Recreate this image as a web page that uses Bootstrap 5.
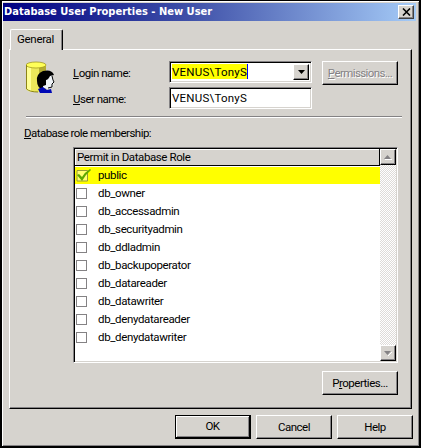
<!DOCTYPE html>
<html lang="en">
<head>
<meta charset="utf-8">
<meta name="viewport" content="width=device-width, initial-scale=1">
<title>Database User Properties - New User</title>
<link href="https://cdn.jsdelivr.net/npm/bootstrap@5.3.0/dist/css/bootstrap.min.css" rel="stylesheet">
<style>
*{border-radius:0!important}
body{width:421px;height:448px;overflow:hidden;background:#d6d3ce;font:11.5px/16px Roboto,"Liberation Sans",sans-serif;letter-spacing:-.36px;color:#000}
.dialog{width:421px;height:448px;border:1px solid #000;border-left-width:2px;border-bottom-width:2px;border-right-width:2px;box-shadow:inset 1px 1px #fff,inset -1px -1px #848284;padding:2px 3px 0 1px}
.titlebar{height:18px;background:linear-gradient(90deg,#000082,#3f50a8 45%,#a5cbf7);color:#fff;font:bold 11px/18px "DejaVu Sans Condensed","DejaVu Sans",sans-serif;font-stretch:condensed;letter-spacing:.02px;padding:0 2px 0 1px}
.closer{width:16px;height:14px;background:#d6d3ce;border:1px solid;border-color:#fff #404040 #404040 #fff;box-shadow:inset -1px -1px #848284}
.tabstrip{height:28px;padding:8px 0 0 7px}
.dtab{width:53px;height:21px;border:1px solid #fff;border-right:1px solid #000;border-bottom:0;border-radius:2px 2px 0 0!important;box-shadow:inset -1px 0 #848284;background:#d6d3ce;padding:1px 0 0 6px;z-index:1;position:relative;letter-spacing:-.3px}
.panel{margin-left:6px;width:403px;height:360px;border:1px solid;border-color:#fff #000 #000 #fff;box-shadow:inset -1px -1px #848284;padding:11px 13px 0 16px}
.dbicon{width:30px;height:34px}
.labels{width:97px;margin-left:17px;letter-spacing:-.5px}
.labels>div{height:26px;line-height:24px}
.fields{gap:4px;margin-left:-1px}
.field{width:143px;height:22px;background:#fff;border:1px solid;border-color:#848284 #fff #fff #848284;box-shadow:inset 1px 1px #000,inset -1px -1px #d6d3ce;padding:2px}
.hl{background:#ff0;height:15px;line-height:16px;border-right:1px solid #00f;letter-spacing:.22px;width:76px;white-space:nowrap}
.val{letter-spacing:.22px;line-height:16px}
.drop{width:16px;height:16px;background:#d6d3ce;border:1px solid;border-color:#fff #000 #000 #fff;box-shadow:inset -1px -1px #848284}
.wbtn{width:76px;height:24px;padding:0;background:#d6d3ce;border:1px solid;border-color:#fff #000 #000 #fff;box-shadow:inset -1px -1px #848284;font-size:11.5px;line-height:21px;letter-spacing:-.5px;color:#000}
.wbtn:disabled{opacity:1;color:#848284;background:#d6d3ce;border-color:#fff #000 #000 #fff;text-shadow:1px 1px #fff;letter-spacing:-.6px}
.wbtn.main{border:1px solid #000;border-right-width:2px;border-bottom-width:2px;box-shadow:inset 1px 1px #fff,inset -1px -1px #848284}
.rule{height:2px;background:#848284;border-bottom:1px solid #fff;margin:3px -4px 0 0}
.caption-line{margin:7px 0 6px -2px;letter-spacing:-.54px}
.roles{width:325px;height:216px;margin-left:47px;background:#fff;border:1px solid;border-color:#848284 #fff #fff #848284;box-shadow:inset 1px 1px #000,inset -1px -1px #d6d3ce;padding:1px}
.head{height:17px;background:#d6d3ce;border:1px solid #000;border-width:0 1px 1px 0;box-shadow:inset 1px 1px #fff;padding-left:2px;line-height:17px;letter-spacing:-.4px}
.role{height:18px;padding-left:1px;line-height:17px}
.role.on{height:17px;margin:1px 0 0;background:#ff0}
.box{width:11px;height:11px;border:1px solid #848284;margin-right:11px}
.track{width:16px;background:repeating-conic-gradient(#fff 0 25%,#dedbd8 0 50%) 0 0/2px 2px}
.sbtn{height:16px;background:#d6d3ce;border:1px solid;border-color:#fff #000 #000 #fff;box-shadow:inset -1px -1px #848284}
.footer-row{padding:6px 0 0 172px;gap:5px}
</style>
</head>
<body>
<main class="dialog d-flex flex-column">
  <header class="titlebar d-flex align-items-center justify-content-between"><span>Database User Properties - New User</span>
    <span class="closer d-flex align-items-center justify-content-center"><svg width="9" height="8" viewBox="0 0 9 8"><path d="M1 .5 8 7.5M8 .5 1 7.5" stroke="#000" stroke-width="1.6"/></svg></span></header>
  <div class="tabstrip"><div class="dtab">General</div></div>
  <section class="panel">
    <div class="d-flex">
      <svg class="dbicon" viewBox="0 0 30 34"><path d="M0 4V28Q2 31 10 31H16Q20 30 20 28V4Z" fill="#ece85a"/><path d="M0 4V28Q2 31 5 31V5Z" fill="#ffff94"/><path d="M13 5H20V29L13 31Z" fill="#b5ad32"/><ellipse cx="10" cy="4" rx="10" ry="3" fill="#ffff58" stroke="#a59c20" stroke-width=".8"/><path d="M.5 4V28Q4 31 12 31" fill="none" stroke="#8c8418"/><path d="M18 13 26 14 28 20 27 26 22 28 17 27Z" fill="#eff3f7"/><path d="M11 20Q10 13 17 10Q26 8 28 14L24 15Q22 19 20 19L20 24 17 25 17 28Q11 27 11 20Z" fill="#000"/><path d="M26 15 27 19 28 21 26 23 26 26 22 27" fill="none" stroke="#000"/><path d="M12 28 17 26 21 29 25 28 26 32H14Z" fill="#0008b5"/></svg>
      <div class="labels"><div><u>L</u>ogin name:</div><div><u>U</u>ser name:</div></div>
      <div class="fields d-flex flex-column">
        <div class="field d-flex justify-content-between"><span class="hl">VENUS\TonyS</span><span class="drop d-flex align-items-center justify-content-center"><svg width="7" height="4"><path d="M0 0H7L3.5 4Z"/></svg></span></div>
        <div class="field val">VENUS\TonyS</div>
      </div>
      <button class="btn wbtn ms-auto" disabled><u>P</u>ermissions...</button>
    </div>
    <div class="rule"></div>
    <div class="caption-line"><u>D</u>atabase role membership:</div>
    <div class="roles d-flex">
      <div class="flex-grow-1">
        <div class="head">Permit in Database Role</div>
        <div class="role on d-flex align-items-center"><svg width="16" height="15" viewBox="0 0 16 15" style="margin-right:6px"><path d="M1 2.5H11.5V13H1Z" fill="#ffff70" stroke="#949a38"/><path d="M1 7 3 6 6 9Q9 4 14 1L15 2Q10 6 6 13Z" fill="#5da800"/></svg>public</div>
        <div class="role d-flex align-items-center"><span class="box"></span>db_owner</div>
        <div class="role d-flex align-items-center"><span class="box"></span>db_accessadmin</div>
        <div class="role d-flex align-items-center"><span class="box"></span>db_securityadmin</div>
        <div class="role d-flex align-items-center"><span class="box"></span>db_ddladmin</div>
        <div class="role d-flex align-items-center"><span class="box"></span>db_backupoperator</div>
        <div class="role d-flex align-items-center"><span class="box"></span>db_datareader</div>
        <div class="role d-flex align-items-center"><span class="box"></span>db_datawriter</div>
        <div class="role d-flex align-items-center"><span class="box"></span>db_denydatareader</div>
        <div class="role d-flex align-items-center"><span class="box"></span>db_denydatawriter</div>
      </div>
      <div class="track d-flex flex-column justify-content-between">
        <span class="sbtn d-flex align-items-center justify-content-center"><svg width="8" height="5"><path d="M0 4H7L3.5 0Z" fill="#848284"/><path d="M1 4.5H8" stroke="#fff"/></svg></span>
        <span class="sbtn d-flex align-items-center justify-content-center"><svg width="8" height="5"><path d="M4 5 8 1" stroke="#fff"/><path d="M0 0H7L3.5 4Z" fill="#848284"/></svg></span>
      </div>
    </div>
    <div class="d-flex justify-content-end mt-2"><button class="btn wbtn">P<u>r</u>operties...</button></div>
  </section>
  <footer class="footer-row d-flex"><button class="btn wbtn main">OK</button><button class="btn wbtn">Cancel</button><button class="btn wbtn">Help</button></footer>
</main>
<script src="https://cdn.jsdelivr.net/npm/bootstrap@5.3.0/dist/js/bootstrap.bundle.min.js"></script>
</body>
</html>
